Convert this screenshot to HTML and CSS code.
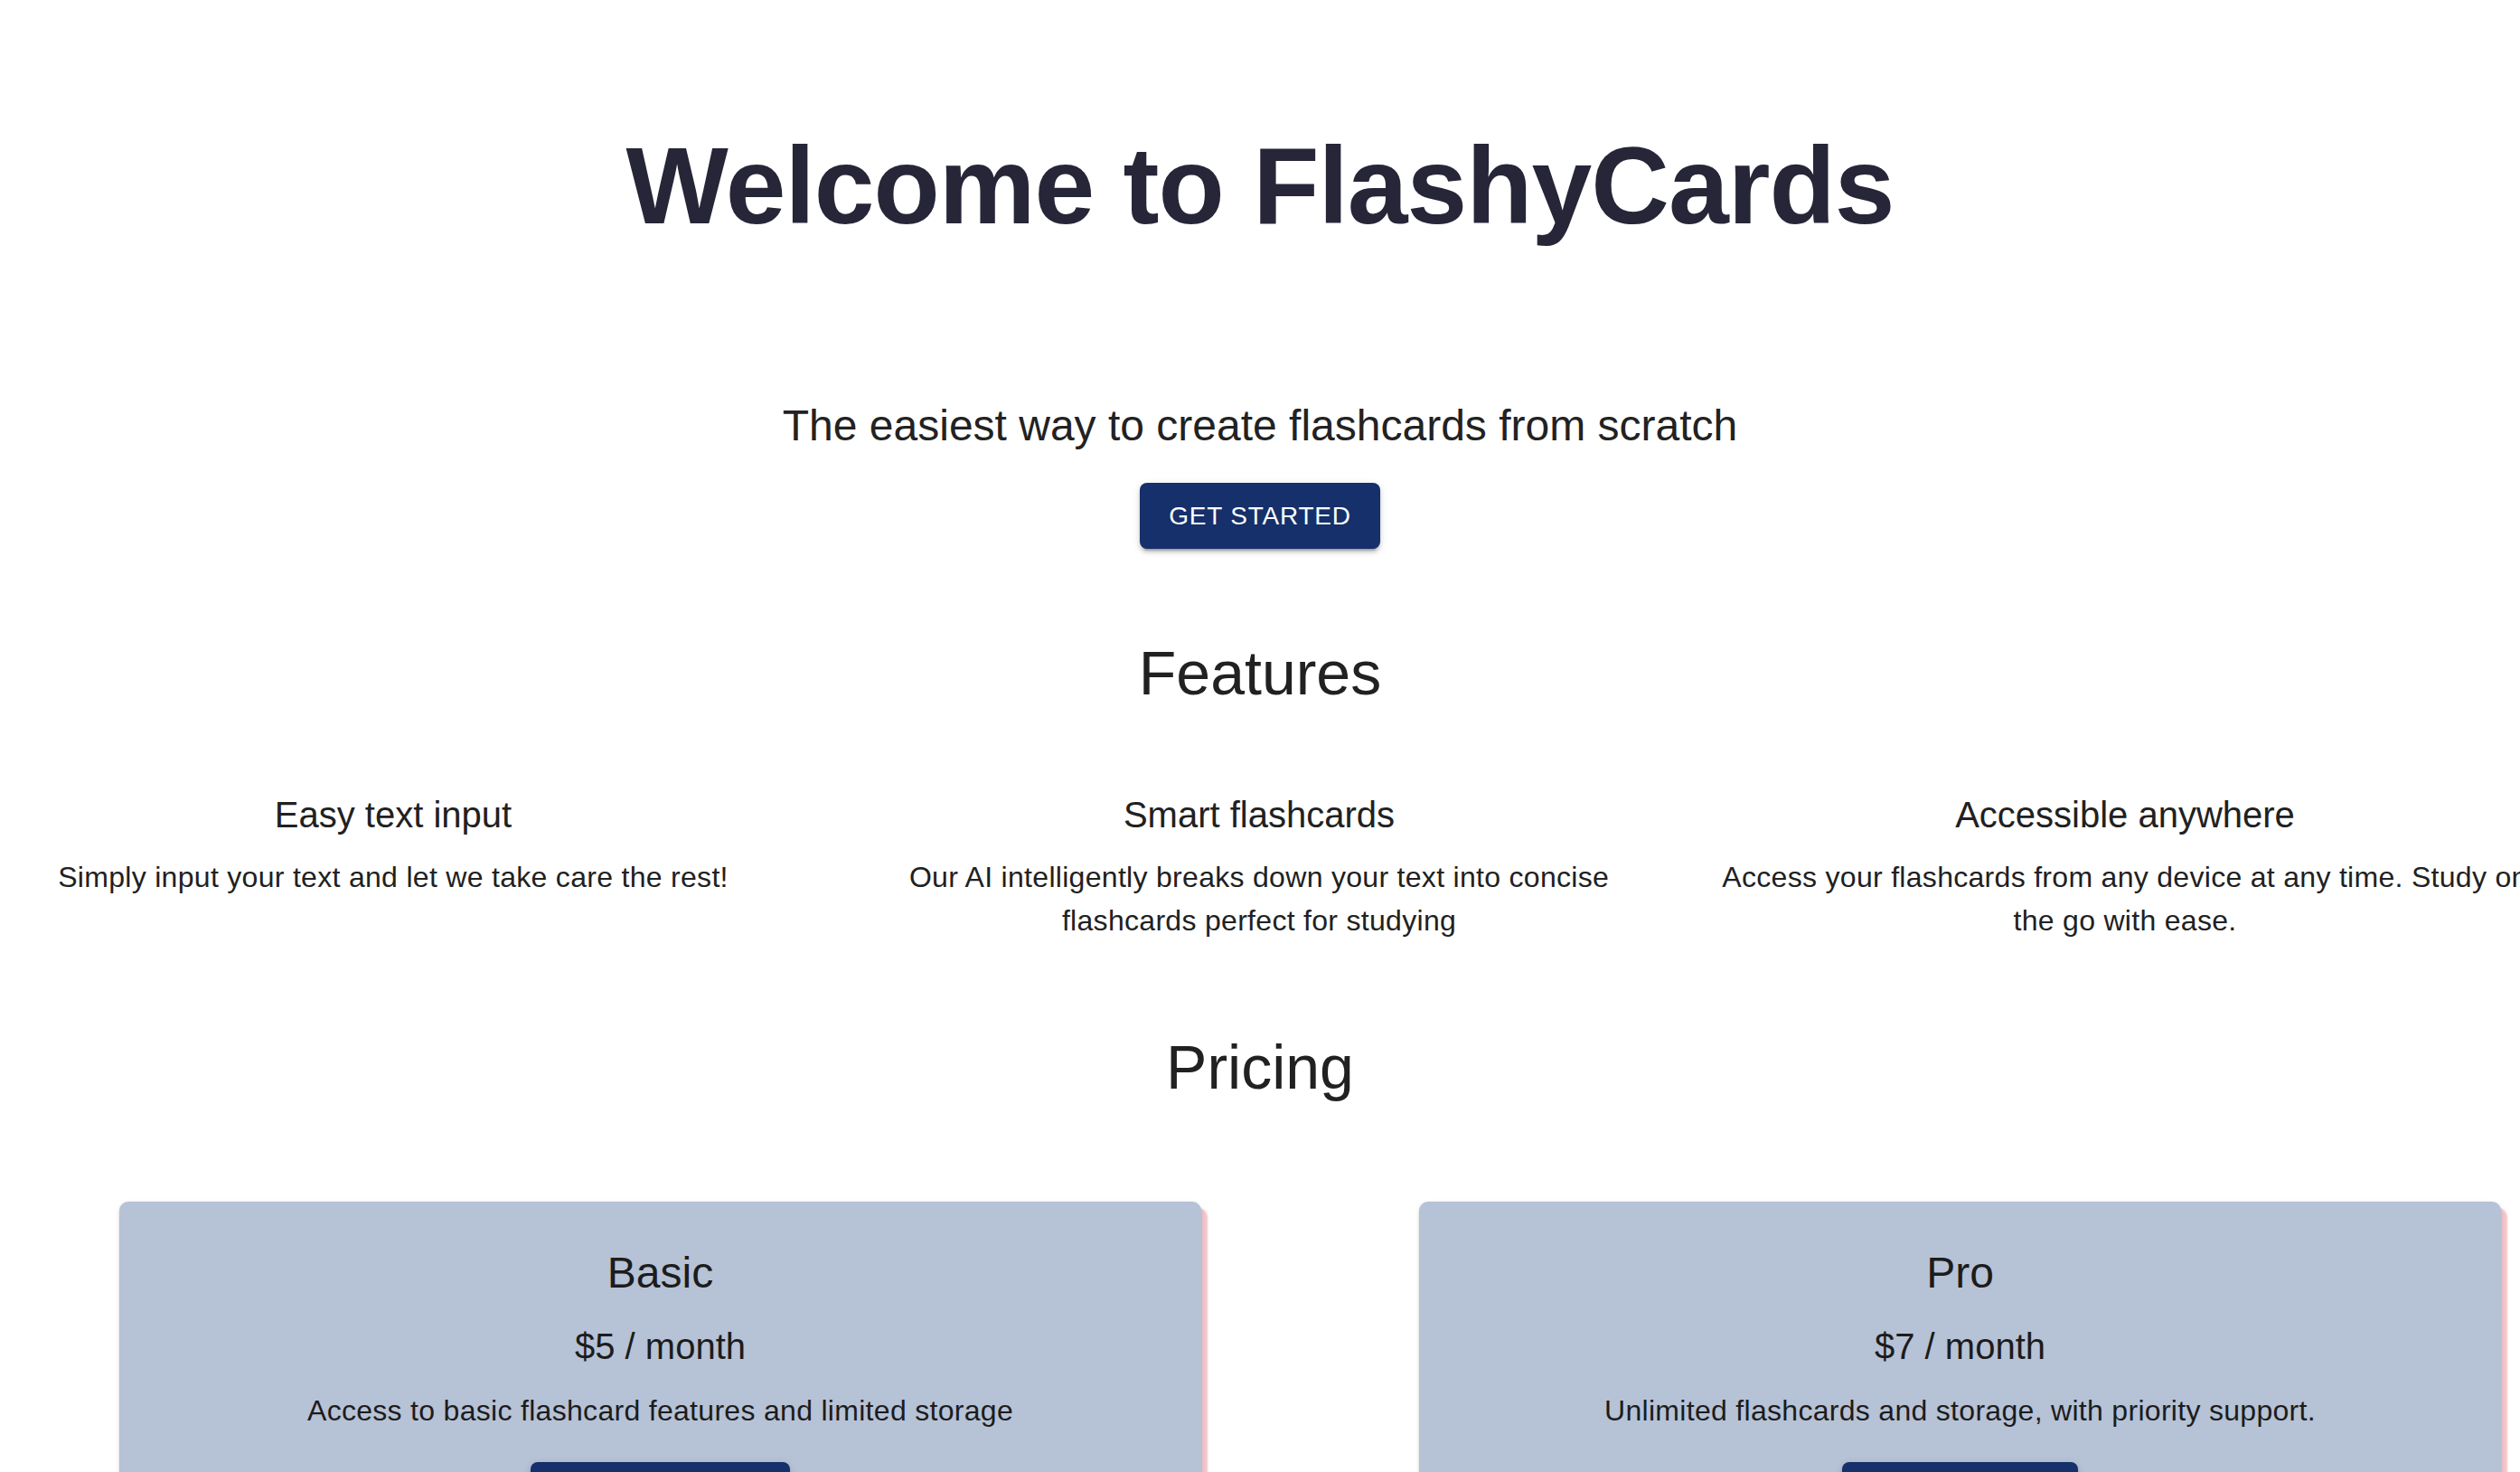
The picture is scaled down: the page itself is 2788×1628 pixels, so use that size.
FILE: index.html
```html
<!DOCTYPE html>
<html lang="en">
<head>
<meta charset="utf-8">
<title>FlashyCards</title>
<link rel="stylesheet" href="styles.css">
</head>
<body>
<main class="page">
  <section class="hero">
    <h1 class="hero-title">Welcome to FlashyCards</h1>
    <p class="hero-sub">The easiest way to create flashcards from scratch</p>
    <button class="btn btn-primary">Get Started</button>
  </section>

  <section class="features">
    <h2 class="section-title">Features</h2>
    <div class="features-clip">
      <div class="features-grid">
        <div class="feature">
          <h3 class="feature-title">Easy text input</h3>
          <p class="feature-text">Simply input your text and let we take care the rest!</p>
        </div>
        <div class="feature">
          <h3 class="feature-title">Smart flashcards</h3>
          <p class="feature-text">Our AI intelligently breaks down your text into concise flashcards perfect for studying</p>
        </div>
        <div class="feature">
          <h3 class="feature-title">Accessible anywhere</h3>
          <p class="feature-text">Access your flashcards from any device at any time. Study on the go with ease.</p>
        </div>
      </div>
    </div>
  </section>

  <section class="pricing">
    <h2 class="section-title pricing-title">Pricing</h2>
    <div class="pricing-row">
      <div class="plan">
        <h3 class="plan-name">Basic</h3>
        <p class="plan-price">$5 / month</p>
        <p class="plan-desc">Access to basic flashcard features and limited storage</p>
        <button class="btn btn-primary plan-btn">Choose Basic</button>
      </div>
      <div class="plan">
        <h3 class="plan-name">Pro</h3>
        <p class="plan-price">$7 / month</p>
        <p class="plan-desc">Unlimited flashcards and storage, with priority support.</p>
        <button class="btn btn-primary plan-btn">Choose Pro</button>
      </div>
    </div>
  </section>
</main>
</body>
</html>
```

FILE: styles.css
```css
html, body {
  margin: 0;
  padding: 0;
  background: #ffffff;
}

body {
  font-family: "Liberation Sans", Arial, Helvetica, sans-serif;
  color: #212121;
}

.page {
  display: flex;
  flex-direction: column;
  overflow: hidden;
}

.hero {
  display: flex;
  flex-direction: column;
  align-items: center;
  text-align: center;
  padding-top: 133px;
}

.hero-title {
  margin: 0;
  font-size: 120px;
  line-height: 144px;
  font-weight: 700;
  letter-spacing: -1px;
  color: #262638;
}

.hero-sub {
  margin: 162px 0 0;
  font-size: 48px;
  line-height: 64px;
  font-weight: 400;
  color: #222222;
}

.btn {
  font-family: "Liberation Sans", Arial, Helvetica, sans-serif;
  border: none;
  cursor: pointer;
  text-transform: uppercase;
  font-size: 28px;
  line-height: 49px;
  letter-spacing: 0.8px;
  padding: 12px 32px;
  border-radius: 8px;
}

.btn-primary {
  background: #15306a;
  color: #ffffff;
  box-shadow: 0 6px 2px -4px rgba(0, 0, 0, 0.2), 0 4px 4px 0 rgba(0, 0, 0, 0.14), 0 2px 10px 0 rgba(0, 0, 0, 0.12);
}

.hero .btn {
  margin-top: 31px;
}

.section-title {
  margin: 0;
  text-align: center;
  font-size: 68px;
  line-height: 84px;
  font-weight: 400;
  color: #212121;
}

.features {
  margin-top: 95px;
}

.features-clip {
  overflow: hidden;
  margin-top: 83px;
}

.features-grid {
  display: grid;
  grid-template-columns: repeat(3, 900px);
  column-gap: 58px;
  margin-left: -15px;
  width: 2816px;
}

.feature {
  text-align: center;
}

.feature-title {
  margin: 0;
  font-size: 40px;
  line-height: 64px;
  font-weight: 400;
  color: #212121;
}

.feature-text {
  margin: 13px 0 0;
  font-size: 32px;
  line-height: 48px;
  letter-spacing: 0.3px;
  color: #212121;
}

.pricing {
  margin-top: 96px;
}

.pricing-row {
  display: flex;
  gap: 241px;
  padding-left: 132px;
  margin-top: 107px;
  padding-bottom: 40px;
}

.plan {
  flex: 0 0 1197px;
  box-sizing: border-box;
  padding: 47px 48px 48px;
  text-align: center;
  background: #b6c2d6;
  border-radius: 10px;
  box-shadow: 0 3px 2px -1px rgba(0, 0, 0, 0.16), 0 1px 2px 0 rgba(0, 0, 0, 0.12), 0 1px 5px 0 rgba(0, 0, 0, 0.1), 7px 7px 2px 0 rgba(238, 178, 186, 0.75);
}

.plan-name {
  margin: 0;
  font-size: 48px;
  line-height: 64px;
  font-weight: 400;
  color: #1c1c1c;
}

.plan-price {
  margin: 17px 0 0;
  font-size: 40px;
  line-height: 64px;
  color: #1c1c1c;
}

.plan-desc {
  margin: 15px 0 0;
  font-size: 32px;
  line-height: 48px;
  letter-spacing: 0.3px;
  color: #1c1c1c;
}

.plan-btn {
  margin-top: 33px;
}
```
